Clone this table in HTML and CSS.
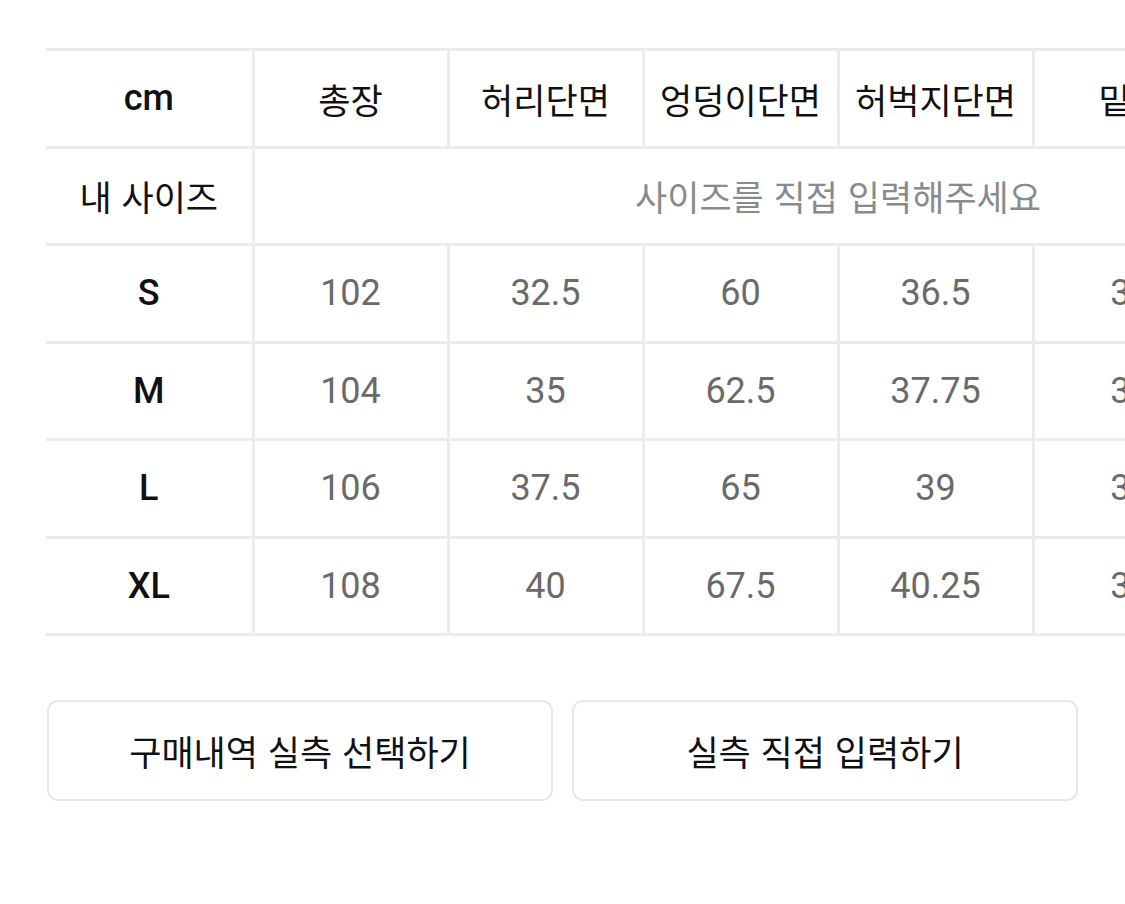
FILE: index.html
```html
<!DOCTYPE html>
<html lang="ko">
<head>
<meta charset="utf-8">
<title>사이즈</title>
<link rel="stylesheet" href="styles.css">
</head>
<body>
<div class="page">
  <table class="size-table">
    <colgroup>
      <col class="col-label">
      <col class="col-data"><col class="col-data"><col class="col-data">
      <col class="col-data"><col class="col-data"><col class="col-data">
    </colgroup>
    <tr class="head">
      <th class="label en">cm</th>
      <th>총장</th>
      <th>허리단면</th>
      <th>엉덩이단면</th>
      <th>허벅지단면</th>
      <th>밑단</th>
      <th>밑위</th>
    </tr>
    <tr>
      <th class="label">내 사이즈</th>
      <td class="placeholder" colspan="6">사이즈를 직접 입력해주세요</td>
    </tr>
    <tr>
      <th class="label en">S</th>
      <td>102</td><td>32.5</td><td>60</td><td>36.5</td><td>30</td><td>31</td>
    </tr>
    <tr>
      <th class="label en">M</th>
      <td>104</td><td>35</td><td>62.5</td><td>37.75</td><td>31</td><td>32</td>
    </tr>
    <tr>
      <th class="label en">L</th>
      <td>106</td><td>37.5</td><td>65</td><td>39</td><td>32</td><td>33</td>
    </tr>
    <tr>
      <th class="label en">XL</th>
      <td>108</td><td>40</td><td>67.5</td><td>40.25</td><td>33</td><td>34</td>
    </tr>
  </table>
  <div class="actions">
    <button class="btn">구매내역 실측 선택하기</button>
    <button class="btn">실측 직접 입력하기</button>
  </div>
</div>
</body>
</html>
```
FILE: styles.css
```css
html, body {
  margin: 0;
  padding: 0;
  background: #ffffff;
  overflow: hidden;
}
body {
  width: 1125px;
  height: 904px;
  font-family: "Noto Sans CJK KR", "Noto Sans", sans-serif;
}
.page {
  padding: 48px 0 0 46px;
  width: 1500px;
}
.size-table {
  border-collapse: collapse;
  table-layout: fixed;
  width: 1377px;
}
.col-label { width: 207px; }
.col-data { width: 195px; }
.size-table tr {
  height: 97.5px;
}
.size-table th,
.size-table td {
  border: 3px solid #ececec;
  text-align: center;
  vertical-align: middle;
  padding: 0;
}
.size-table tr > :first-child {
  border-left: none;
}
.size-table th {
  font-size: 35px;
  font-weight: 400;
  color: #111111;
  line-height: 1;
}
.size-table th.en {
  font-family: "Roboto", "Noto Sans CJK KR", sans-serif;
  font-weight: 500;
  font-size: 36px;
}
.size-table td {
  font-family: "Roboto", "Noto Sans CJK KR", sans-serif;
  font-size: 36px;
  color: #6a6a6a;
  font-weight: 400;
}
.size-table td.placeholder {
  font-family: "Noto Sans CJK KR", sans-serif;
  font-size: 35px;
  color: #8a8a8a;
  font-weight: 400;
}
.actions {
  display: flex;
  gap: 19px;
  margin-top: 64px;
  padding-left: 1px;
}
.btn {
  width: 506px;
  height: 101px;
  background: #ffffff;
  border: 2px solid #e8e8e8;
  border-radius: 11px;
  font-family: "Noto Sans CJK KR", sans-serif;
  font-size: 35px;
  font-weight: 400;
  color: #111111;
  padding: 0;
}
```
